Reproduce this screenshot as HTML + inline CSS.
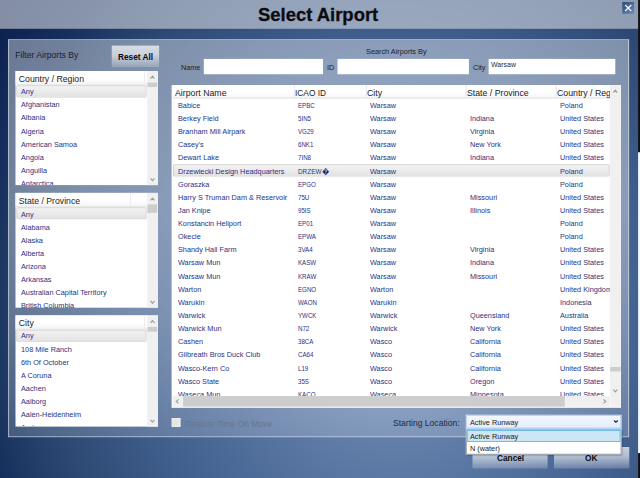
<!DOCTYPE html><html><head><meta charset="utf-8"><title>Select Airport</title><style>
html,body{margin:0;padding:0}
body{width:640px;height:478px;overflow:hidden;position:relative;background:#0e2450;font-family:"Liberation Sans",sans-serif;}
.abs{position:absolute}
.b{position:absolute;left:0;top:0;transform-origin:0 0;box-sizing:border-box}
.t{position:absolute;white-space:nowrap;line-height:1;transform-origin:0 50%}
.clip{position:absolute;overflow:hidden}
#bg1{left:0;top:0;width:640px;height:478px;background:radial-gradient(ellipse 360px 400px at 398px 323px,rgb(122,150,192) 0%,rgb(98,127,170) 30%,rgb(66,96,142) 70%,rgb(42,70,112) 100%,rgb(30,57,100) 110%,rgb(23,48,93) 116%,rgb(13,35,79) 132%,rgb(8,28,70) 150%)}
.btn{background:linear-gradient(to bottom,rgba(255,255,255,.70),rgba(255,255,255,.60) 42%,rgba(255,255,255,.19))}
.thumb{background:#cdcdcd}
.sel{border:1px solid #d3d3d3;border-radius:1.5px;background:linear-gradient(to bottom,#f2f2f2,#e3e3e3)}
</style></head><body>
<div id="bg1" class="abs"></div>
<div class="b" style="width:640px;height:29px;transform:translate(0.00px,0.00px) scale(1.00000,0.99310);background:rgba(218,222,230,.58)"></div>
<div class="t" style="-webkit-text-stroke:0.3px #0c0c10;left:257.60px;top:6px;font-size:18.1px;color:#0c0c10;transform:scaleX(1.019);font-weight:bold">Select Airport</div>
<div class="b" style="width:12px;height:12px;transform:translate(622.30px,2.00px) scale(0.98333,0.98333);background:linear-gradient(135deg,#2c4a7c,#6d8ab8)"></div>
<div class="b" style="width:621px;height:398px;transform:translate(8.10px,39.00px) scale(1.00000,1.00050);border-style:solid;border-width:1px;border-color:rgba(215,222,233,.55) rgba(220,226,236,.68) rgba(205,215,233,.42) rgba(220,226,236,.68);background:linear-gradient(to bottom,rgba(255,255,255,.385) 0,rgba(255,255,255,.375) 42%,rgba(255,255,255,.30) 67%,rgba(255,255,255,.175) 100%)"></div>
<div class="t" style="left:15.30px;top:51px;font-size:8.6px;color:#1b2030">Filter Airports By</div>
<div class="b btn" style="width:47px;height:21px;transform:translate(111.75px,45.60px) scale(1.00745,1.02381);"></div>
<div class="t" style="left:117.70px;top:53px;font-size:8.5px;color:#0a0a0e;transform:scaleX(0.975);font-weight:bold">Reset All</div>
<div class="b" style="width:142px;height:114px;transform:translate(15.50px,71.00px) scale(1.00352,1.00088);background:#fff"></div>
<div class="b" style="width:132px;height:14px;transform:translate(15.50px,71.00px) scale(0.99773,1.02143);background:linear-gradient(to bottom,#fff 60%,#f3f3f3);border-bottom:1px solid #e6e6e6"></div>
<div class="b" style="width:1px;height:13px;transform:translate(144.00px,71.00px) scale(1.00000,1.02308);background:#ececec"></div>
<div class="b sel" style="width:130px;height:12px;transform:translate(16.30px,85.30px) scale(1.00231,1.00833);"></div>
<div class="b" style="width:11px;height:114px;transform:translate(147.20px,71.00px) scale(0.98182,1.00088);background:#f0f0f0"></div>
<div class="b thumb" style="width:10px;height:4px;transform:translate(147.40px,82.50px) scale(0.97000,1.12500);"></div>
<div class="clip" style="left:15px;top:71px;width:132px;height:114px">
<div class="t" style="left:3.80px;top:4px;font-size:8.7px;color:#222">Country / Region</div>
<div class="t" style="left:6.20px;top:17px;font-size:7.8px;color:#2a3282;transform:scaleX(0.937)">Any</div>
<div class="t" style="left:6.20px;top:30px;font-size:7.8px;color:#2a3282;transform:scaleX(0.937)">Afghanistan</div>
<div class="t" style="left:6.20px;top:43px;font-size:7.8px;color:#2a3282;transform:scaleX(0.937)">Albania</div>
<div class="t" style="left:6.20px;top:57px;font-size:7.8px;color:#2a3282;transform:scaleX(0.937)">Algeria</div>
<div class="t" style="left:6.20px;top:70px;font-size:7.8px;color:#2a3282;transform:scaleX(0.937)">American Samoa</div>
<div class="t" style="left:6.20px;top:83px;font-size:7.8px;color:#2a3282;transform:scaleX(0.937)">Angola</div>
<div class="t" style="left:6.20px;top:96px;font-size:7.8px;color:#2a3282;transform:scaleX(0.937)">Anguilla</div>
<div class="t" style="left:6.20px;top:109px;font-size:7.8px;color:#2a3282;transform:scaleX(0.937)">Antarctica</div>
</div>
<div class="b" style="width:142px;height:115px;transform:translate(15.50px,192.90px) scale(1.00352,0.99826);background:#fff"></div>
<div class="b" style="width:132px;height:14px;transform:translate(15.50px,192.90px) scale(0.99773,1.02143);background:linear-gradient(to bottom,#fff 60%,#f3f3f3);border-bottom:1px solid #e6e6e6"></div>
<div class="b" style="width:1px;height:13px;transform:translate(130.00px,192.90px) scale(1.00000,1.02308);background:#ececec"></div>
<div class="b sel" style="width:130px;height:12px;transform:translate(16.30px,207.20px) scale(1.00231,1.00833);"></div>
<div class="b" style="width:11px;height:115px;transform:translate(147.20px,192.90px) scale(0.98182,0.99826);background:#f0f0f0"></div>
<div class="b thumb" style="width:10px;height:8px;transform:translate(147.40px,204.40px) scale(0.97000,1.05000);"></div>
<div class="clip" style="left:15px;top:192px;width:132px;height:116px">
<div class="t" style="left:3.80px;top:5px;font-size:8.7px;color:#222">State / Province</div>
<div class="t" style="left:6.20px;top:19px;font-size:7.8px;color:#2a3282;transform:scaleX(0.937)">Any</div>
<div class="t" style="left:6.20px;top:32px;font-size:7.8px;color:#2a3282;transform:scaleX(0.937)">Alabama</div>
<div class="t" style="left:6.20px;top:45px;font-size:7.8px;color:#2a3282;transform:scaleX(0.937)">Alaska</div>
<div class="t" style="left:6.20px;top:58px;font-size:7.8px;color:#2a3282;transform:scaleX(0.937)">Alberta</div>
<div class="t" style="left:6.20px;top:71px;font-size:7.8px;color:#2a3282;transform:scaleX(0.937)">Arizona</div>
<div class="t" style="left:6.20px;top:84px;font-size:7.8px;color:#2a3282;transform:scaleX(0.937)">Arkansas</div>
<div class="t" style="left:6.20px;top:97px;font-size:7.8px;color:#2a3282;transform:scaleX(0.937)">Australian Capital Territory</div>
<div class="t" style="left:6.20px;top:110px;font-size:7.8px;color:#2a3282;transform:scaleX(0.937)">British Columbia</div>
</div>
<div class="b" style="width:142px;height:111px;transform:translate(15.50px,315.40px) scale(1.00352,1.00180);background:#fff"></div>
<div class="b" style="width:132px;height:14px;transform:translate(15.50px,315.40px) scale(0.99773,1.02143);background:linear-gradient(to bottom,#fff 60%,#f3f3f3);border-bottom:1px solid #e6e6e6"></div>
<div class="b" style="width:1px;height:13px;transform:translate(144.00px,315.40px) scale(1.00000,1.02308);background:#ececec"></div>
<div class="b sel" style="width:130px;height:12px;transform:translate(16.30px,329.70px) scale(1.00231,1.00833);"></div>
<div class="b" style="width:11px;height:111px;transform:translate(147.20px,315.40px) scale(0.98182,1.00180);background:#f0f0f0"></div>
<div class="b thumb" style="width:10px;height:5px;transform:translate(147.40px,327.00px) scale(0.97000,0.92000);"></div>
<div class="clip" style="left:15px;top:315px;width:132px;height:111px">
<div class="t" style="left:3.80px;top:4px;font-size:8.7px;color:#222">City</div>
<div class="t" style="left:6.20px;top:17px;font-size:7.8px;color:#2a3282;transform:scaleX(0.937)">Any</div>
<div class="t" style="left:6.20px;top:31px;font-size:7.8px;color:#2a3282;transform:scaleX(0.937)">108 Mile Ranch</div>
<div class="t" style="left:6.20px;top:44px;font-size:7.8px;color:#2a3282;transform:scaleX(0.937)">6th Of October</div>
<div class="t" style="left:6.20px;top:57px;font-size:7.8px;color:#2a3282;transform:scaleX(0.937)">A Coruna</div>
<div class="t" style="left:6.20px;top:70px;font-size:7.8px;color:#2a3282;transform:scaleX(0.937)">Aachen</div>
<div class="t" style="left:6.20px;top:83px;font-size:7.8px;color:#2a3282;transform:scaleX(0.937)">Aalborg</div>
<div class="t" style="left:6.20px;top:96px;font-size:7.8px;color:#2a3282;transform:scaleX(0.937)">Aalen-Heidenheim</div>
<div class="t" style="left:6.20px;top:109px;font-size:7.8px;color:#2a3282;transform:scaleX(0.937)">Aarhus</div>
</div>
<div class="t" style="left:366.20px;top:48px;font-size:7.9px;color:#1b2030;transform:scaleX(0.927)">Search Airports By</div>
<div class="t" style="left:180.70px;top:64px;font-size:7.9px;color:#1b2030;transform:scaleX(0.915)">Name</div>
<div class="b" style="width:119px;height:15px;transform:translate(203.80px,58.90px) scale(1.00168,1.02333);background:#fff"></div>
<div class="t" style="left:327.00px;top:64px;font-size:7.9px;color:#1b2030;transform:scaleX(0.92)">ID</div>
<div class="b" style="width:131px;height:15px;transform:translate(337.50px,58.90px) scale(1.00305,1.02333);background:#fff"></div>
<div class="t" style="left:472.60px;top:64px;font-size:7.9px;color:#1b2030;transform:scaleX(0.92)">City</div>
<div class="b" style="width:127px;height:15px;transform:translate(488.65px,58.90px) scale(0.99724,1.02333);background:#fff"></div>
<div class="t" style="left:490.80px;top:61px;font-size:7.9px;color:#2a2a2e;transform:scaleX(0.885)">Warsaw</div>
<div class="b" style="width:449px;height:323px;transform:translate(171.60px,85.10px) scale(1.00089,0.99907);background:#fff"></div>
<div class="b" style="width:437px;height:13px;transform:translate(172.60px,85.10px) scale(1.00092,0.99231);background:linear-gradient(to bottom,#fff 55%,#f5f5f5)"></div>
<div class="b" style="width:437px;height:1px;transform:translate(172.60px,97.60px) scale(1.00092,1.00000);background:#e2e2e2"></div>
<div class="b" style="width:1px;height:13px;transform:translate(293.80px,85.10px) scale(1.00000,0.99231);background:#e8e8e8"></div>
<div class="b" style="width:1px;height:13px;transform:translate(365.80px,85.10px) scale(1.00000,0.99231);background:#e8e8e8"></div>
<div class="b" style="width:1px;height:13px;transform:translate(465.80px,85.10px) scale(1.00000,0.99231);background:#e8e8e8"></div>
<div class="b" style="width:1px;height:13px;transform:translate(555.80px,85.10px) scale(1.00000,0.99231);background:#e8e8e8"></div>
<div class="b sel" style="width:437px;height:12px;transform:translate(173.00px,164.18px) scale(0.99931,1.02917);"></div>
<div class="b" style="width:11px;height:311px;transform:translate(610.00px,85.10px) scale(0.98182,0.99968);background:#f0f0f0"></div>
<div class="b thumb" style="width:10px;height:4px;transform:translate(610.20px,367.00px) scale(1.04000,1.12500);"></div>
<div class="b" style="width:448px;height:11px;transform:translate(172.60px,396.00px) scale(1.00045,0.97273);background:#f0f0f0"></div>
<div class="b thumb" style="width:382px;height:10px;transform:translate(183.10px,396.10px) scale(0.99921,1.05000);"></div>
<div class="b" style="width:1px;height:11px;transform:translate(610.00px,396.00px) scale(1.00000,0.97273);background:#f9f9f9"></div>
<div class="clip" style="left:172px;top:85px;width:438px;height:311px">
<div class="t" style="left:2.80px;top:4px;font-size:8.9px;color:#222;transform:scaleX(0.985)">Airport Name</div>
<div class="t" style="left:123.00px;top:4px;font-size:8.9px;color:#222;transform:scaleX(0.94)">ICAO ID</div>
<div class="t" style="left:194.90px;top:4px;font-size:8.9px;color:#222;transform:scaleX(0.985)">City</div>
<div class="t" style="left:295.10px;top:4px;font-size:8.9px;color:#222;transform:scaleX(0.985)">State / Province</div>
<div class="t" style="left:385.10px;top:4px;font-size:8.9px;color:#222;transform:scaleX(0.985)">Country / Region</div>
<div class="t" style="left:6.00px;top:17px;font-size:7.8px;color:#2a3282;transform:scaleX(0.937)">Babice</div>
<div class="t" style="left:125.50px;top:17px;font-size:7.8px;color:#2a3282;transform:scaleX(0.79)">EPBC</div>
<div class="t" style="left:197.80px;top:17px;font-size:7.8px;color:#2a3282;transform:scaleX(0.937)">Warsaw</div>
<div class="t" style="left:388.20px;top:17px;font-size:7.8px;color:#2a3282;transform:scaleX(0.937)">Poland</div>
<div class="t" style="left:6.00px;top:30px;font-size:7.8px;color:#2a3282;transform:scaleX(0.937)">Berkey Field</div>
<div class="t" style="left:125.50px;top:30px;font-size:7.8px;color:#2a3282;transform:scaleX(0.79)">5IN5</div>
<div class="t" style="left:197.80px;top:30px;font-size:7.8px;color:#2a3282;transform:scaleX(0.937)">Warsaw</div>
<div class="t" style="left:297.70px;top:30px;font-size:7.8px;color:#2a3282;transform:scaleX(0.937)">Indiana</div>
<div class="t" style="left:388.20px;top:30px;font-size:7.8px;color:#2a3282;transform:scaleX(0.937)">United States</div>
<div class="t" style="left:6.00px;top:43px;font-size:7.8px;color:#2a3282;transform:scaleX(0.937)">Branham Mill Airpark</div>
<div class="t" style="left:125.50px;top:43px;font-size:7.8px;color:#2a3282;transform:scaleX(0.79)">VG29</div>
<div class="t" style="left:197.80px;top:43px;font-size:7.8px;color:#2a3282;transform:scaleX(0.937)">Warsaw</div>
<div class="t" style="left:297.70px;top:43px;font-size:7.8px;color:#2a3282;transform:scaleX(0.937)">Virginia</div>
<div class="t" style="left:388.20px;top:43px;font-size:7.8px;color:#2a3282;transform:scaleX(0.937)">United States</div>
<div class="t" style="left:6.00px;top:56px;font-size:7.8px;color:#2a3282;transform:scaleX(0.937)">Casey's</div>
<div class="t" style="left:125.50px;top:56px;font-size:7.8px;color:#2a3282;transform:scaleX(0.79)">6NK1</div>
<div class="t" style="left:197.80px;top:56px;font-size:7.8px;color:#2a3282;transform:scaleX(0.937)">Warsaw</div>
<div class="t" style="left:297.70px;top:56px;font-size:7.8px;color:#2a3282;transform:scaleX(0.937)">New York</div>
<div class="t" style="left:388.20px;top:56px;font-size:7.8px;color:#2a3282;transform:scaleX(0.937)">United States</div>
<div class="t" style="left:6.00px;top:69px;font-size:7.8px;color:#2a3282;transform:scaleX(0.937)">Dewart Lake</div>
<div class="t" style="left:125.50px;top:69px;font-size:7.8px;color:#2a3282;transform:scaleX(0.79)">7IN8</div>
<div class="t" style="left:197.80px;top:69px;font-size:7.8px;color:#2a3282;transform:scaleX(0.937)">Warsaw</div>
<div class="t" style="left:297.70px;top:69px;font-size:7.8px;color:#2a3282;transform:scaleX(0.937)">Indiana</div>
<div class="t" style="left:388.20px;top:69px;font-size:7.8px;color:#2a3282;transform:scaleX(0.937)">United States</div>
<div class="t" style="left:6.00px;top:83px;font-size:7.8px;color:#2a3282;transform:scaleX(0.937)">Drzewiecki Design Headquarters</div>
<div class="t" style="left:125.50px;top:83px;font-size:7.8px;color:#2a3282;transform:scaleX(0.82)">DRZEW</div>
<div class="t" style="left:149.70px;top:83px;font-size:7.8px;color:#1f2670;transform:scaleX(0.93)">�</div>
<div class="t" style="left:197.80px;top:83px;font-size:7.8px;color:#2a3282;transform:scaleX(0.937)">Warsaw</div>
<div class="t" style="left:388.20px;top:83px;font-size:7.8px;color:#2a3282;transform:scaleX(0.937)">Poland</div>
<div class="t" style="left:6.00px;top:96px;font-size:7.8px;color:#2a3282;transform:scaleX(0.937)">Goraszka</div>
<div class="t" style="left:125.50px;top:96px;font-size:7.8px;color:#2a3282;transform:scaleX(0.79)">EPGO</div>
<div class="t" style="left:197.80px;top:96px;font-size:7.8px;color:#2a3282;transform:scaleX(0.937)">Warsaw</div>
<div class="t" style="left:388.20px;top:96px;font-size:7.8px;color:#2a3282;transform:scaleX(0.937)">Poland</div>
<div class="t" style="left:6.00px;top:109px;font-size:7.8px;color:#2a3282;transform:scaleX(0.937)">Harry S Truman Dam &amp; Reservoir</div>
<div class="t" style="left:125.50px;top:109px;font-size:7.8px;color:#2a3282;transform:scaleX(0.79)">75U</div>
<div class="t" style="left:197.80px;top:109px;font-size:7.8px;color:#2a3282;transform:scaleX(0.937)">Warsaw</div>
<div class="t" style="left:297.70px;top:109px;font-size:7.8px;color:#2a3282;transform:scaleX(0.937)">Missouri</div>
<div class="t" style="left:388.20px;top:109px;font-size:7.8px;color:#2a3282;transform:scaleX(0.937)">United States</div>
<div class="t" style="left:6.00px;top:122px;font-size:7.8px;color:#2a3282;transform:scaleX(0.937)">Jan Knipe</div>
<div class="t" style="left:125.50px;top:122px;font-size:7.8px;color:#2a3282;transform:scaleX(0.79)">95IS</div>
<div class="t" style="left:197.80px;top:122px;font-size:7.8px;color:#2a3282;transform:scaleX(0.937)">Warsaw</div>
<div class="t" style="left:297.70px;top:122px;font-size:7.8px;color:#2a3282;transform:scaleX(0.937)">Illinois</div>
<div class="t" style="left:388.20px;top:122px;font-size:7.8px;color:#2a3282;transform:scaleX(0.937)">United States</div>
<div class="t" style="left:6.00px;top:135px;font-size:7.8px;color:#2a3282;transform:scaleX(0.937)">Konstancin Heliport</div>
<div class="t" style="left:125.50px;top:135px;font-size:7.8px;color:#2a3282;transform:scaleX(0.79)">EP01</div>
<div class="t" style="left:197.80px;top:135px;font-size:7.8px;color:#2a3282;transform:scaleX(0.937)">Warsaw</div>
<div class="t" style="left:388.20px;top:135px;font-size:7.8px;color:#2a3282;transform:scaleX(0.937)">Poland</div>
<div class="t" style="left:6.00px;top:148px;font-size:7.8px;color:#2a3282;transform:scaleX(0.937)">Okecie</div>
<div class="t" style="left:125.50px;top:148px;font-size:7.8px;color:#2a3282;transform:scaleX(0.79)">EPWA</div>
<div class="t" style="left:197.80px;top:148px;font-size:7.8px;color:#2a3282;transform:scaleX(0.937)">Warsaw</div>
<div class="t" style="left:388.20px;top:148px;font-size:7.8px;color:#2a3282;transform:scaleX(0.937)">Poland</div>
<div class="t" style="left:6.00px;top:161px;font-size:7.8px;color:#2a3282;transform:scaleX(0.937)">Shandy Hall Farm</div>
<div class="t" style="left:125.50px;top:161px;font-size:7.8px;color:#2a3282;transform:scaleX(0.79)">3VA4</div>
<div class="t" style="left:197.80px;top:161px;font-size:7.8px;color:#2a3282;transform:scaleX(0.937)">Warsaw</div>
<div class="t" style="left:297.70px;top:161px;font-size:7.8px;color:#2a3282;transform:scaleX(0.937)">Virginia</div>
<div class="t" style="left:388.20px;top:161px;font-size:7.8px;color:#2a3282;transform:scaleX(0.937)">United States</div>
<div class="t" style="left:6.00px;top:174px;font-size:7.8px;color:#2a3282;transform:scaleX(0.937)">Warsaw Mun</div>
<div class="t" style="left:125.50px;top:174px;font-size:7.8px;color:#2a3282;transform:scaleX(0.79)">KASW</div>
<div class="t" style="left:197.80px;top:174px;font-size:7.8px;color:#2a3282;transform:scaleX(0.937)">Warsaw</div>
<div class="t" style="left:297.70px;top:174px;font-size:7.8px;color:#2a3282;transform:scaleX(0.937)">Indiana</div>
<div class="t" style="left:388.20px;top:174px;font-size:7.8px;color:#2a3282;transform:scaleX(0.937)">United States</div>
<div class="t" style="left:6.00px;top:188px;font-size:7.8px;color:#2a3282;transform:scaleX(0.937)">Warsaw Mun</div>
<div class="t" style="left:125.50px;top:188px;font-size:7.8px;color:#2a3282;transform:scaleX(0.79)">KRAW</div>
<div class="t" style="left:197.80px;top:188px;font-size:7.8px;color:#2a3282;transform:scaleX(0.937)">Warsaw</div>
<div class="t" style="left:297.70px;top:188px;font-size:7.8px;color:#2a3282;transform:scaleX(0.937)">Missouri</div>
<div class="t" style="left:388.20px;top:188px;font-size:7.8px;color:#2a3282;transform:scaleX(0.937)">United States</div>
<div class="t" style="left:6.00px;top:201px;font-size:7.8px;color:#2a3282;transform:scaleX(0.937)">Warton</div>
<div class="t" style="left:125.50px;top:201px;font-size:7.8px;color:#2a3282;transform:scaleX(0.79)">EGNO</div>
<div class="t" style="left:197.80px;top:201px;font-size:7.8px;color:#2a3282;transform:scaleX(0.937)">Warton</div>
<div class="t" style="left:388.20px;top:201px;font-size:7.8px;color:#2a3282;transform:scaleX(0.937)">United Kingdom</div>
<div class="t" style="left:6.00px;top:214px;font-size:7.8px;color:#2a3282;transform:scaleX(0.937)">Warukin</div>
<div class="t" style="left:125.50px;top:214px;font-size:7.8px;color:#2a3282;transform:scaleX(0.79)">WAON</div>
<div class="t" style="left:197.80px;top:214px;font-size:7.8px;color:#2a3282;transform:scaleX(0.937)">Warukin</div>
<div class="t" style="left:388.20px;top:214px;font-size:7.8px;color:#2a3282;transform:scaleX(0.937)">Indonesia</div>
<div class="t" style="left:6.00px;top:227px;font-size:7.8px;color:#2a3282;transform:scaleX(0.937)">Warwick</div>
<div class="t" style="left:125.50px;top:227px;font-size:7.8px;color:#2a3282;transform:scaleX(0.79)">YWCK</div>
<div class="t" style="left:197.80px;top:227px;font-size:7.8px;color:#2a3282;transform:scaleX(0.937)">Warwick</div>
<div class="t" style="left:297.70px;top:227px;font-size:7.8px;color:#2a3282;transform:scaleX(0.937)">Queensland</div>
<div class="t" style="left:388.20px;top:227px;font-size:7.8px;color:#2a3282;transform:scaleX(0.937)">Australia</div>
<div class="t" style="left:6.00px;top:240px;font-size:7.8px;color:#2a3282;transform:scaleX(0.937)">Warwick Mun</div>
<div class="t" style="left:125.50px;top:240px;font-size:7.8px;color:#2a3282;transform:scaleX(0.79)">N72</div>
<div class="t" style="left:197.80px;top:240px;font-size:7.8px;color:#2a3282;transform:scaleX(0.937)">Warwick</div>
<div class="t" style="left:297.70px;top:240px;font-size:7.8px;color:#2a3282;transform:scaleX(0.937)">New York</div>
<div class="t" style="left:388.20px;top:240px;font-size:7.8px;color:#2a3282;transform:scaleX(0.937)">United States</div>
<div class="t" style="left:6.00px;top:253px;font-size:7.8px;color:#2a3282;transform:scaleX(0.937)">Cashen</div>
<div class="t" style="left:125.50px;top:253px;font-size:7.8px;color:#2a3282;transform:scaleX(0.79)">38CA</div>
<div class="t" style="left:197.80px;top:253px;font-size:7.8px;color:#2a3282;transform:scaleX(0.937)">Wasco</div>
<div class="t" style="left:297.70px;top:253px;font-size:7.8px;color:#2a3282;transform:scaleX(0.937)">California</div>
<div class="t" style="left:388.20px;top:253px;font-size:7.8px;color:#2a3282;transform:scaleX(0.937)">United States</div>
<div class="t" style="left:6.00px;top:266px;font-size:7.8px;color:#2a3282;transform:scaleX(0.937)">Gilbreath Bros Duck Club</div>
<div class="t" style="left:125.50px;top:266px;font-size:7.8px;color:#2a3282;transform:scaleX(0.79)">CA64</div>
<div class="t" style="left:197.80px;top:266px;font-size:7.8px;color:#2a3282;transform:scaleX(0.937)">Wasco</div>
<div class="t" style="left:297.70px;top:266px;font-size:7.8px;color:#2a3282;transform:scaleX(0.937)">California</div>
<div class="t" style="left:388.20px;top:266px;font-size:7.8px;color:#2a3282;transform:scaleX(0.937)">United States</div>
<div class="t" style="left:6.00px;top:280px;font-size:7.8px;color:#2a3282;transform:scaleX(0.937)">Wasco-Kern Co</div>
<div class="t" style="left:125.50px;top:280px;font-size:7.8px;color:#2a3282;transform:scaleX(0.79)">L19</div>
<div class="t" style="left:197.80px;top:280px;font-size:7.8px;color:#2a3282;transform:scaleX(0.937)">Wasco</div>
<div class="t" style="left:297.70px;top:280px;font-size:7.8px;color:#2a3282;transform:scaleX(0.937)">California</div>
<div class="t" style="left:388.20px;top:280px;font-size:7.8px;color:#2a3282;transform:scaleX(0.937)">United States</div>
<div class="t" style="left:6.00px;top:293px;font-size:7.8px;color:#2a3282;transform:scaleX(0.937)">Wasco State</div>
<div class="t" style="left:125.50px;top:293px;font-size:7.8px;color:#2a3282;transform:scaleX(0.79)">35S</div>
<div class="t" style="left:197.80px;top:293px;font-size:7.8px;color:#2a3282;transform:scaleX(0.937)">Wasco</div>
<div class="t" style="left:297.70px;top:293px;font-size:7.8px;color:#2a3282;transform:scaleX(0.937)">Oregon</div>
<div class="t" style="left:388.20px;top:293px;font-size:7.8px;color:#2a3282;transform:scaleX(0.937)">United States</div>
<div class="t" style="left:6.00px;top:306px;font-size:7.8px;color:#2a3282;transform:scaleX(0.937)">Waseca Mun</div>
<div class="t" style="left:125.50px;top:306px;font-size:7.8px;color:#2a3282;transform:scaleX(0.79)">KACO</div>
<div class="t" style="left:197.80px;top:306px;font-size:7.8px;color:#2a3282;transform:scaleX(0.937)">Waseca</div>
<div class="t" style="left:297.70px;top:306px;font-size:7.8px;color:#2a3282;transform:scaleX(0.937)">Minnesota</div>
<div class="t" style="left:388.20px;top:306px;font-size:7.8px;color:#2a3282;transform:scaleX(0.937)">United States</div>
</div>
<div class="b" style="width:9px;height:9px;transform:translate(171.75px,418.00px) scale(0.96111,0.98889);background:#e5e5e5;border:1px solid #f0f0f0"></div>
<div class="t" style="left:184.80px;top:420px;font-size:8.9px;color:#667590;transform:scaleX(0.955)">Restore Time On Move</div>
<div class="t" style="left:392.70px;top:419px;font-size:9.0px;color:#232a3c;transform:scaleX(0.95)">Starting Location:</div>
<div class="b btn" style="width:75px;height:22px;transform:translate(472.50px,447.00px) scale(1.00133,0.97727);"></div>
<div class="b btn" style="width:75px;height:22px;transform:translate(554.00px,447.00px) scale(1.00400,0.97727);"></div>
<div class="t" style="left:497.00px;top:454px;font-size:8.5px;color:#0a0a0e;transform:scaleX(0.975);font-weight:bold">Cancel</div>
<div class="t" style="left:585.30px;top:454px;font-size:8.5px;color:#0a0a0e;transform:scaleX(0.975);font-weight:bold">OK</div>
<div class="b" style="width:156px;height:14px;transform:translate(465.80px,414.70px) scale(1.00000,1.01429);border:1px solid #d6e3f6;border-right-color:#b9cfee;border-bottom-color:#c3d6f1;background:linear-gradient(to bottom,#f3f7fe,#e2ecfb)"></div>
<div class="t" style="left:469.60px;top:419px;font-size:7.9px;color:#1b1b22;transform:scaleX(0.925)">Active Runway</div>
<div class="b" style="width:156px;height:25px;transform:translate(465.80px,429.40px) scale(0.99872,1.01600);background:#fff;box-shadow:1.5px 1.5px 2px rgba(0,0,0,.55);border:1px solid #8d97a6;border-top-color:#9fb0c4"></div>
<div class="b" style="width:154px;height:12px;transform:translate(466.80px,430.00px) scale(0.99870,1.00000);background:#cbe6f5;border:1px solid #6fbce6"></div>
<div class="t" style="left:469.60px;top:433px;font-size:7.9px;color:#1b1b22;transform:scaleX(0.925)">Active Runway</div>
<div class="t" style="left:469.60px;top:445px;font-size:7.9px;color:#1b1b22;transform:scaleX(0.925)">N (water)</div>
<svg class="abs" style="left:0;top:0" width="640" height="478" viewBox="0 0 640 478"><path d="M625.2 4.9 L631.3 11 M631.3 4.9 L625.2 11" stroke="#fff" stroke-opacity=".93" stroke-width="1.35" fill="none"/><path d="M150.55 78.55000000000001 L152.5 76.25 L154.45 78.55000000000001" fill="none" stroke="#9d9d9d" stroke-width="1.15"/><path d="M150.55 178.35 L152.5 180.65 L154.45 178.35" fill="none" stroke="#9d9d9d" stroke-width="1.15"/><path d="M150.55 200.45000000000002 L152.5 198.15 L154.45 200.45000000000002" fill="none" stroke="#9d9d9d" stroke-width="1.15"/><path d="M150.55 300.95 L152.5 303.24999999999994 L154.45 300.95" fill="none" stroke="#9d9d9d" stroke-width="1.15"/><path d="M150.55 322.94999999999993 L152.5 320.65 L154.45 322.94999999999993" fill="none" stroke="#9d9d9d" stroke-width="1.15"/><path d="M150.55 419.85 L152.5 422.15 L154.45 419.85" fill="none" stroke="#9d9d9d" stroke-width="1.15"/><path d="M613.3499999999999 92.55000000000001 L615.3 90.25 L617.25 92.55000000000001" fill="none" stroke="#9d9d9d" stroke-width="1.15"/><path d="M613.3499999999999 389.55 L615.3 391.84999999999997 L617.25 389.55" fill="none" stroke="#9d9d9d" stroke-width="1.15"/><path d="M178.55 399.45 L176.25 401.4 L178.55 403.34999999999997" fill="none" stroke="#9d9d9d" stroke-width="1.15"/><path d="M603.45 399.45 L605.75 401.4 L603.45 403.34999999999997" fill="none" stroke="#9d9d9d" stroke-width="1.15"/><path d="M614.0 420.45 L615.9 422.15000000000003 L617.8 420.45" fill="none" stroke="#2a2a2a" stroke-width="1.25"/></svg>
<div class="b" style="width:2px;height:152px;transform:translate(638.10px,0.00px) scale(0.95000,1.00197);background:#111"></div>
<div class="b" style="width:2px;height:301px;transform:translate(638.10px,152.30px) scale(0.95000,0.99967);background:#f4fbfd"></div>
<div class="b" style="width:2px;height:25px;transform:translate(638.10px,453.20px) scale(0.95000,0.99200);background:#111"></div>
</body></html>
